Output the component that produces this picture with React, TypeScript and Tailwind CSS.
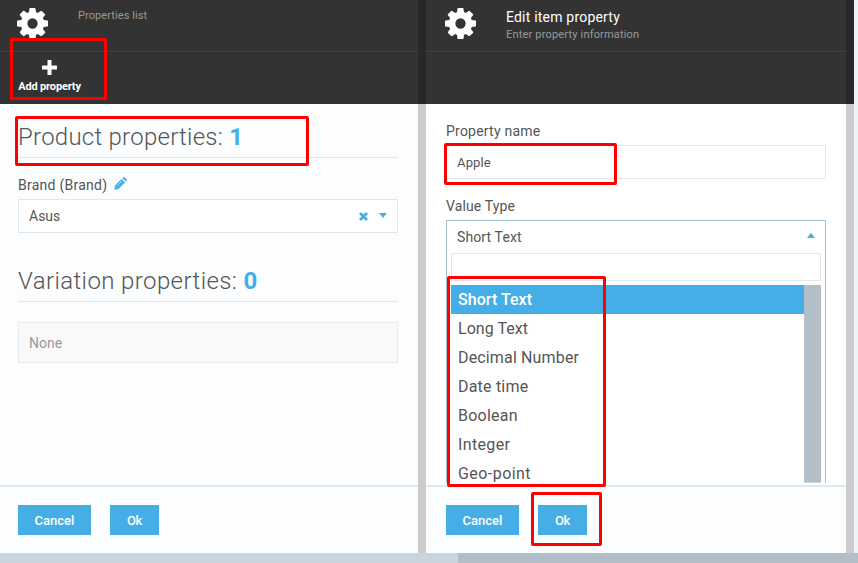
import type { ReactNode } from "react";

const options = [
  { label: "Short Text", tracking: "tracking-[0.05px]" },
  { label: "Long Text", tracking: "tracking-[0.05px]" },
  { label: "Decimal Number", tracking: "tracking-[0.15px]" },
  { label: "Date time", tracking: "tracking-[0.2px]" },
  { label: "Boolean", tracking: "tracking-[0.25px]" },
  { label: "Integer", tracking: "tracking-[0.35px]" },
  { label: "Geo-point", tracking: "tracking-[0.45px]" },
];

function Gear() {
  return (
    <svg className="h-[31px] w-[31px] shrink-0" viewBox="0 0 1536 1536" fill="#fff">
      <path d="M1024 768q0-106-75-181t-181-75-181 75-75 181 75 181 181 75 181-75 75-181zm512-109v222q0 12-8 23t-20 13l-185 28q-19 54-39 91 35 50 107 138 10 12 10 25t-9 23q-27 37-99 108t-94 71q-12 0-26-9l-138-108q-44 23-91 38-16 136-29 186-7 28-36 28H657q-14 0-24.500-8.500T621 1506l-28-184q-49-16-90-37l-141 107q-10 9-25 9-14 0-25-11-126-114-165-168-7-10-7-23 0-12 8-23 15-21 51-66.500t54-70.500q-27-50-41-99L29 913q-13-2-21-12.500T0 877V655q0-12 8-23t19-13l186-28q14-46 39-92-40-57-107-138-10-12-10-24 0-10 9-23 26-36 98.500-107.500T337 135q13 0 26 10l138 107q44-23 91-38 16-136 29-186 7-28 36-28h222q14 0 24.500 8.500T915 30l28 184q49 16 90 37l142-107q9-9 24-9 13 0 25 10 129 119 165 170 7 8 7 22 0 12-8 23-15 21-51 66.500t-54 70.500q26 50 41 98l183 28q13 2 21 12.500t8 23.500z" />
    </svg>
  );
}

function Footer({ inset }: { inset: string }) {
  return (
    <div className="h-[68px] shrink-0 border-t-2 border-[#dfe9f0] bg-[#fbfdff] pt-[18px]">
      <div className={"flex gap-[19px] text-[13px] font-medium text-white " + inset}>
        <button className="h-[30px] w-[73px] bg-[#45aee6] pt-px">Cancel</button>
        <button className="h-[30px] w-[49px] bg-[#45aee6] pt-px tracking-[-0.3px]">Ok</button>
      </div>
    </div>
  );
}

function Divider() {
  return (
    <div className="flex w-2 shrink-0 flex-col bg-[#ccc]">
      <div className="h-[104px] bg-[#282828]" />
    </div>
  );
}

interface PanelProps {
  title: ReactNode;
  toolbar?: ReactNode;
  frame: string;
  inset: string;
  children: ReactNode;
}

function Panel({ title, toolbar, frame, inset, children }: PanelProps) {
  return (
    <section className={"flex shrink-0 flex-col overflow-hidden " + frame}>
      <header className="h-[104px] shrink-0 bg-[#333]">
        <div className={"flex h-[52px] border-b border-[#444] pt-[8px] " + inset}>
          <div className="-ml-px flex">
            <Gear />
            {title}
          </div>
        </div>
        <div className="h-[52px] border-t border-[#2b2b2b]">{toolbar}</div>
      </header>
      <div className={"min-h-0 flex-1 overflow-hidden " + inset}>
        <div className="w-[380px]">{children}</div>
      </div>
      <Footer inset={inset} />
    </section>
  );
}

function Heading({ text, count, tracking }: { text: string; count: string; tracking: string }) {
  return (
    <h2 className="flex h-[37px] items-start border-b border-[#dfe8ee] text-[24px] leading-[32px] font-light whitespace-pre text-[#555]">
      <span className={tracking}>{text} </span>
      <b className="font-bold text-[#45aee6]">{count}</b>
    </h2>
  );
}

export default function App() {
  return (
    <main className="relative flex h-[563px] w-[858px] flex-col overflow-hidden bg-[#eaf4f5] font-['Roboto','Open_Sans',sans-serif] text-[#555]">
      <div className="flex h-[553px]">
        <Panel
          frame="w-[418px] bg-[#fbfdff]"
          inset="pl-[18px]"
          title={<div className="ml-[30px] pt-px text-[11px] leading-[13px] tracking-[0.08px] text-[#999]">Properties list</div>}
          toolbar={
            <div className="ml-[18px] flex w-[63px] flex-col items-center pt-[7px]">
              <svg className="h-[15px] w-[15px]" viewBox="0 0 15 15" fill="#fff">
                <path d="M6 0h3q.5 0 .5.5V5.500h5q.5 0 .5.5v3q0 .5-.5.5h-5v5q0 .5-.5.5H6q-.5 0-.5-.5v-5h-5Q0 9.500 0 9V6q0-.5.5-.5h5v-5Q5.500 0 6 0z" />
              </svg>
              <div className="mt-[5px] text-[11px] leading-[14px] font-bold tracking-[-0.15px] whitespace-nowrap text-white">Add property</div>
            </div>
          }
        >
          <div className="mt-[17px]"><Heading text="Product properties:" count="1" tracking="tracking-[0.25px]" /></div>
          <div className="mt-[17px] flex h-[20px] items-center text-[14px]">
            <span className="tracking-[0.25px]">Brand (Brand)</span>
            <svg className="mb-[3px] ml-[7px] h-[13px] w-[13px]" viewBox="0 0 13 13" fill="#45aee6">
              <path d="M.8 8.800 7.600 2l3.400 3.400-6.800 6.800-3.900.5zM8.400 1.200 9.400.3q.6-.5 1.200 0l2.100 2.100q.5.600 0 1.200l-.9 1z" />
              <path d="m3.200 8.800 4.600-4.600M1.500 10.300l1.200 1.200" stroke="#fff" strokeWidth=".5" />
            </svg>
          </div>
          <div className="mt-[4px] flex h-[34px] items-center border border-[#dfe8ee] bg-white pl-[10px] text-[14px]">
            <span>Asus</span>
            <svg className="mr-[11px] ml-auto h-[9px] w-[9px]" viewBox="0 0 9 9" stroke="#45aee6" strokeWidth="2.800">
              <path d="m1 1 7 7M8 1 1 8" />
            </svg>
            <svg className="mr-[10px] mb-[2px] h-[5px] w-[8px]" viewBox="0 0 8 5" fill="#45aee6"><path d="M0 0h8L4 5z" /></svg>
          </div>
          <div className="mt-[32px]"><Heading text="Variation properties:" count="0" tracking="tracking-[0.4px]" /></div>
          <div className="mt-[20px] flex h-[41px] items-center border border-[#e8ebed] bg-[#f9f9f9] pt-px pl-[10px] text-[14px] text-[#999]">None</div>
        </Panel>
        <Divider />
        <Panel
          frame="w-[420px] bg-white"
          inset="pl-[20px]"
          title={
            <div className="ml-[30px] pt-px">
              <div className="text-[14px] leading-[16px] tracking-[0.2px] text-white">Edit item property</div>
              <div className="mt-[2px] text-[11px] leading-[16px] tracking-[0.18px] text-[#999]">Enter property information</div>
            </div>
          }
        >
          <label className="block h-[41px] pt-[17px] text-[14px] leading-[20px] tracking-[0.22px]">Property name</label>
          <div className="flex h-[34px] items-center border border-[#dfe8ee] pt-px pl-[10px] text-[13px] tracking-[0.15px]">Apple</div>
          <label className="block h-[41px] pt-[17px] text-[14px] leading-[20px] tracking-[0.12px]">Value Type</label>
          <div className="h-[263px] border border-b-0 border-[#a0bfd0]">
            <div className="flex h-[32px] items-center justify-between px-[10px] text-[14px]">
              <span className="tracking-[0.12px]">Short Text</span>
              <svg className="mb-[4px] h-[5px] w-[8px]" viewBox="0 0 8 5" fill="#45aee6"><path d="M0 5h8L4 0z" /></svg>
            </div>
            <div className="mx-[4px] h-[28px] border border-[#dfe8ee]" />
            <div className="mx-[4px] mt-[4px] flex h-[198px] overflow-hidden">
              <ul className="flex-1 text-[16px] leading-[29px]">
                {options.map((o, i) => (
                  <li key={o.label} className={"h-[29px] pl-[7px] " + o.tracking + (i === 0 ? " bg-[#45aee6] font-medium text-white" : "")}>
                    {o.label}
                  </li>
                ))}
              </ul>
              <div className="w-[17px] border-b border-[#c9d5de] bg-[#b2bfc8]" />
            </div>
          </div>
        </Panel>
        <Divider />
      </div>
      <div className="flex h-[10px] bg-[#c9d5de]"><div className="ml-[458px] flex-1 bg-[#b2bfc8]" /></div>

      <div className="absolute top-[38px] left-[10px] h-[62px] w-[97px] rounded-[2px] border-3 border-[#f00]" />
      <div className="absolute top-[116px] left-[15px] h-[50px] w-[294px] rounded-[2px] border-3 border-[#f00]" />
      <div className="absolute top-[143px] left-[444px] h-[42px] w-[173px] rounded-[2px] border-3 border-[#f00]" />
      <div className="absolute top-[276px] left-[447px] h-[211px] w-[159px] rounded-[2px] border-3 border-[#f00]" />
      <div className="absolute top-[492px] left-[531px] h-[54px] w-[71px] rounded-[2px] border-3 border-[#f00]" />
    </main>
  );
}
